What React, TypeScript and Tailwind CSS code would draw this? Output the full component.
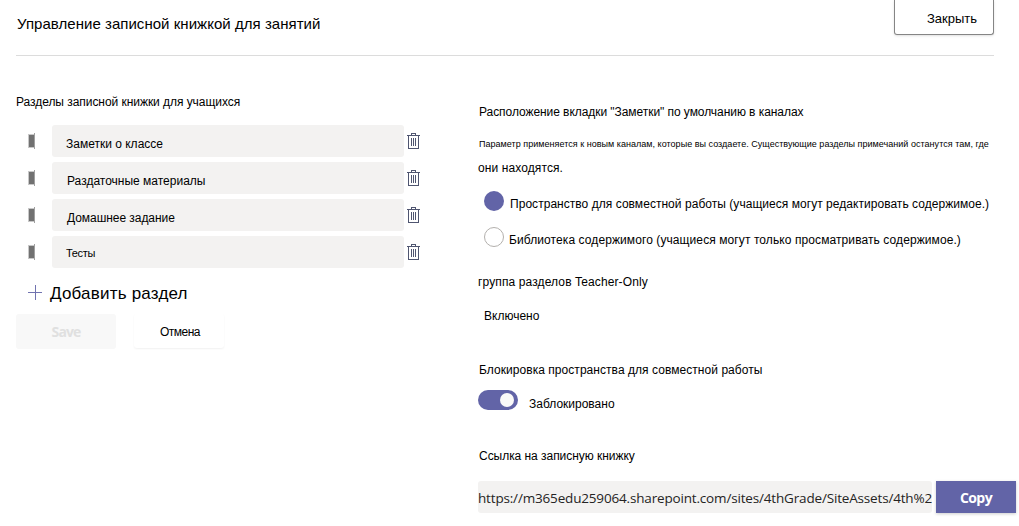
import React from 'react';

const sections = [
  { name: 'Заметки о классе', text: 'text-[12px] pl-[14px] pt-[5px]' },
  { name: 'Раздаточные материалы', text: 'text-[12px] pl-[15px] pt-[5px]' },
  { name: 'Домашнее задание', text: 'text-[12px] tracking-[-0.05px] pl-[15px] pt-[5px]' },
  { name: 'Тесты', text: 'text-[11px] tracking-[-0.3px] pl-[14px] pt-[3px]' },
];

const TrashIcon = () => (
  <svg width="13" height="16" viewBox="0 0 13 16" fill="none" stroke="#4f5570" shapeRendering="crispEdges">
    <path d="M0 2.5h13M4.5 2V.5h4V2M1.5 3v12.5h10V3M4.5 5v8M6.5 5v8M8.5 5v8" />
  </svg>
);

const HandleIcon = () => (
  <svg width="7" height="16" viewBox="0 0 7 16" shapeRendering="crispEdges">
    <path d="M0 1h6v14H0z" fill="#c8c8c8" />
    <path d="M1 2h5v12H1z" fill="#717171" />
    <path d="M6 0h1v16H6z" fill="#a0a0a0" />
  </svg>
);

const App = () => {
  return (
    <div className="w-[1019px] h-[526px] overflow-hidden bg-white text-black text-[12px] font-['Liberation_Sans',sans-serif] whitespace-nowrap">
      {/* Header */}
      <header className="ml-4 w-[978px] h-14 border-b border-[#dcdcdc] flex justify-between items-start">
        <h1 className="pt-3 pl-px leading-6 text-[15px] tracking-[0.04px]">Управление записной книжкой для занятий</h1>
        <button className="w-[100px] h-[35px] border border-t-0 border-[#858585] rounded-b-[3px] pl-8 pt-[3px] text-left text-[13px] shadow-sm">
          Закрыть
        </button>
      </header>

      <div className="flex">
        {/* Student sections */}
        <div className="w-[478px] pl-4 pt-9">
          <h2 className="leading-5 tracking-[-0.05px]">Разделы записной книжки для учащихся</h2>
          <ul className="mt-[13px] flex flex-col gap-[5px]">
            {sections.map((section) => (
              <li key={section.name} className="flex items-center pl-3">
                <HandleIcon />
                <div className={`ml-[17px] mr-[3px] w-[352px] h-8 rounded-[3px] bg-[#f3f2f1] flex items-center ${section.text}`}>
                  {section.name}
                </div>
                <TrashIcon />
              </li>
            ))}
          </ul>
          <button className="mt-[14px] ml-3 h-6 flex items-center gap-2 text-[17px] tracking-[0.2px]">
            <svg width="14" height="15" viewBox="0 0 14 15" stroke="#7173b0" className="-mt-1" shapeRendering="crispEdges">
              <path d="M7.5 0v15M0 7.5h14" />
            </svg>
            Добавить раздел
          </button>
          <div className="mt-2 flex gap-[18px]">
            <button className="w-[100px] h-[35px] rounded-[3px] bg-[#f8f8f8] text-[#e0e0e0] text-[14px] tracking-[-0.9px] font-bold font-['Open_Sans',sans-serif]">
              Save
            </button>
            <button className="w-[90px] h-[34px] rounded-[3px] pt-[2px] pl-[2px] tracking-[-0.5px] shadow-[0_1px_2px_rgba(0,0,0,0.06)]">
              Отмена
            </button>
          </div>
        </div>

        {/* Notebook settings */}
        <div className="w-[541px] pt-[46px]">
          <h2 className="pl-px leading-5 tracking-[-0.06px]">Расположение вкладки "Заметки" по умолчанию в каналах</h2>
          <p className="mt-3 pl-px leading-5 text-[9px] tracking-[0.03px]">
            Параметр применяется к новым каналам, которые вы создаете. Существующие разделы примечаний останутся там, где
          </p>
          <p className="mt-1 leading-5 tracking-[0.1px]">они находятся.</p>
          <div className="mt-[13px] pl-[6px] flex flex-col gap-4">
            <label className="flex h-5 gap-[6px]">
              <span className="size-5 rounded-full bg-[#6264a7]" />
              <span className="pt-[3px] leading-5 tracking-[0.04px]">Пространство для совместной работы (учащиеся могут редактировать содержимое.)</span>
            </label>
            <label className="flex h-5 gap-[5px]">
              <span className="size-5 rounded-full border border-[#b3b0ad]" />
              <span className="pt-[3px] leading-5 tracking-[0.09px]">Библиотека содержимого (учащиеся могут только просматривать содержимое.)</span>
            </label>
          </div>
          <h2 className="mt-[25px] leading-5 tracking-[0.12px]">группа разделов Teacher-Only</h2>
          <p className="mt-[14px] pl-[6px] leading-5">Включено</p>
          <h2 className="mt-[34px] pl-px leading-5 tracking-[0.05px]">Блокировка пространства для совместной работы</h2>
          <div className="mt-[10px] flex h-5 gap-[11px]">
            <span className="w-10 h-5 rounded-full bg-[#6264a7] flex items-center justify-end pr-1">
              <span className="size-[14px] rounded-full bg-[#faf9f8]" />
            </span>
            <span className="pt-1 leading-5">Заблокировано</span>
          </div>
          <h2 className="mt-9 pl-px leading-5 tracking-[-0.04px]">Ссылка на записную книжку</h2>
          <div className="mt-[15px] flex gap-1 font-['Open_Sans',sans-serif]">
            <div className="w-[454px] h-8 rounded-[3px] bg-[#f3f2f1] text-[#252423] text-[13.5px] tracking-[-0.17px] leading-[34px] overflow-hidden">
              https://m365edu259064.sharepoint.com/sites/4thGrade/SiteAssets/4th%2
            </div>
            <button className="w-20 h-8 bg-[#6264a7] text-white text-[14px] tracking-[-0.6px] font-bold shadow-[0_1px_3px_rgba(0,0,0,0.2)]">
              Copy
            </button>
          </div>
        </div>
      </div>
    </div>
  );
};

export default App;
